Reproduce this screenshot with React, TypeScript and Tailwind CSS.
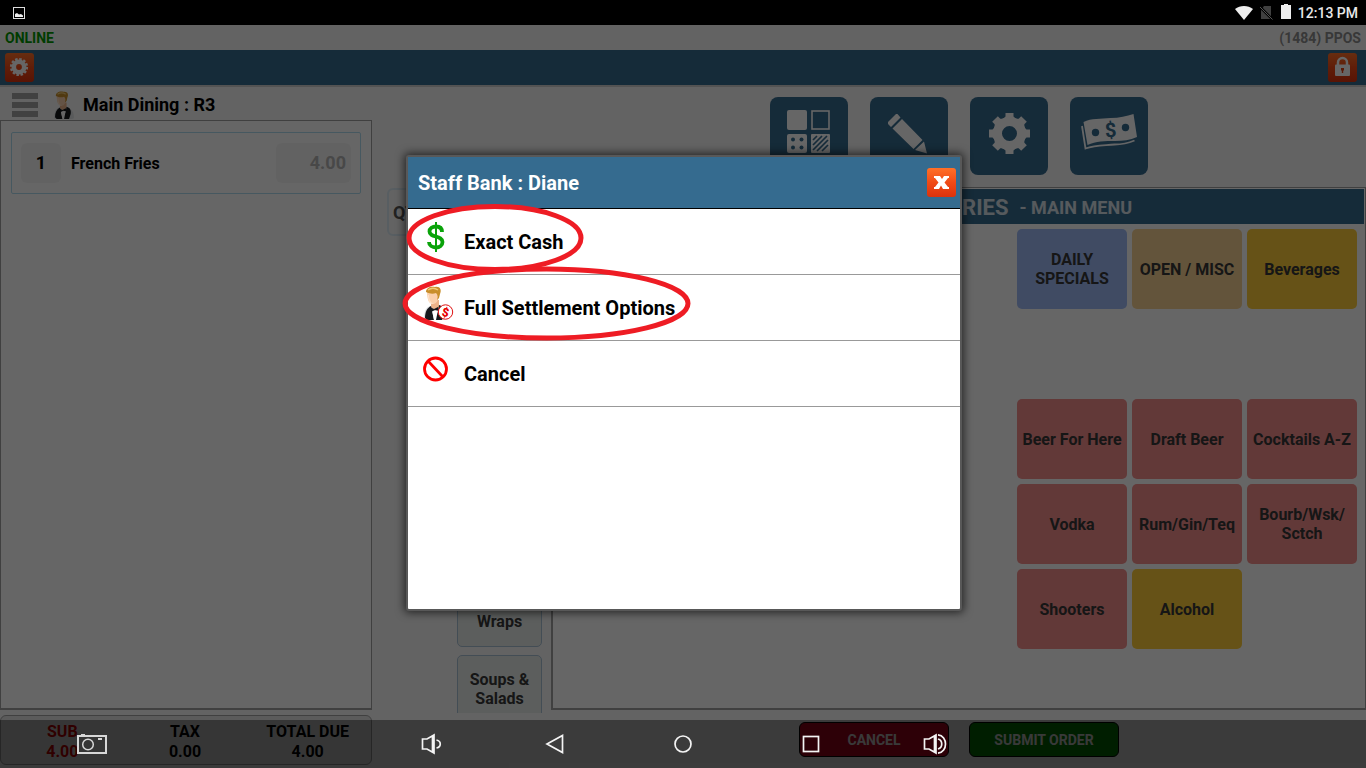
import type { ReactNode } from 'react';
import clsx from 'clsx';

interface Category {
  label: string;
  tone: string;
}

const BLUE = 'bg-[#a0bcf8]';
const SAND = 'bg-[#f8d294]';
const GOLD = 'bg-[#ffcd3a]';
const ROSE = 'bg-[#f58e8c]';

// null leaves a free cell in the grid
const categories: (Category | null)[] = [
  { label: 'DAILY SPECIALS', tone: BLUE },
  { label: 'OPEN / MISC', tone: SAND },
  { label: 'Beverages', tone: GOLD },
  null,
  null,
  null,
  { label: 'Beer For Here', tone: ROSE },
  { label: 'Draft Beer', tone: ROSE },
  { label: 'Cocktails A-Z', tone: ROSE },
  { label: 'Vodka', tone: ROSE },
  { label: 'Rum/Gin/Teq', tone: ROSE },
  { label: 'Bourb/Wsk/ Sctch', tone: ROSE },
  { label: 'Shooters', tone: ROSE },
  { label: 'Alcohol', tone: GOLD },
];

const totals = [
  { label: 'SUB', value: '4.00', color: 'text-[#c80000]' },
  { label: 'TAX', value: '0.00', color: 'text-black' },
  { label: 'TOTAL DUE', value: '4.00', color: 'text-black' },
];

function Waiter({ badge = false, className }: { badge?: boolean; className?: string }) {
  return (
    <svg viewBox={badge ? '0 0 30 34' : '0 0 25 34'} className={className} aria-hidden="true">
      {/* shirt sleeves */}
      <path d="M0 33c0-6 1-10 4-12l5-2 7 1c5 2 8 5 8 13-2 1-4 1-6 1H3c-1 0-2 0-3-1z" fill="#dfe2e4" />
      <path d="M7 14h8v8l-4 2-4-3z" fill="#eeb389" />
      {/* vest */}
      <path d="M1 32c0-6 2-10 6-12l3 14H3zM15 19c4 1 6 4 5 9l-2 6h-8l4-9z" fill="#17191d" />
      <path d="M8 24l3 1 3-1-2 10h-2z" fill="#fff" />
      <path d="M6 21l4 2 4-2 1 4-4-1-4 2z" fill="#17191d" />
      <path d="M3 5c0-3 4-4 8-3 4 0 5 4 4 8-1 5-3 8-6 8-4 0-6-4-6-13z" fill="#fbd0ac" />
      <path d="M4 9c0 5 1 8 4 9h2c-3-1-5-4-5-9z" fill="#fee4cc" />
      <path d="M2 6c0-4 4-6 9-5 5-1 7 3 5 7l-1 4-2 2c1-3 1-5-1-7-3 1-6 1-10-1z" fill="#c98f2c" />
      <path d="M4 4c3-2 7-2 10 0" stroke="#f0cb78" strokeWidth="1.500" fill="none" />
      {badge && (
        <>
          <circle cx="21.500" cy="26" r="7.200" fill="#fff" stroke="#e01010" strokeWidth="1" />
          <text
            x="21.500"
            y="30.500"
            textAnchor="middle"
            transform="rotate(12 21.500 26)"
            className="fill-[#e80000] text-[12px] font-black"
          >
            $
          </text>
        </>
      )}
    </svg>
  );
}

function OrangeButton({ label, children }: { label: string; children: ReactNode }) {
  return (
    <button
      type="button"
      aria-label={label}
      className="flex size-[29px] shrink-0 items-center justify-center rounded-[3px] bg-gradient-to-b from-[#ff7028] via-[#f04a16] to-[#dc320c]"
    >
      <svg viewBox="0 0 29 29" className="size-full" aria-hidden="true">
        {children}
      </svg>
    </button>
  );
}

function ToolTile({ label, children }: { label: string; children: ReactNode }) {
  return (
    <button type="button" aria-label={label} className="size-[78px] rounded-lg bg-[#356b8f]">
      <svg viewBox="0 0 78 78" className="size-full" fill="#fff" aria-hidden="true">
        {children}
      </svg>
    </button>
  );
}

function StatusBar() {
  return (
    <div className="flex h-[25px] shrink-0 items-center justify-between bg-black pr-2 pl-[13px]">
      <svg viewBox="0 0 12 12" className="size-3" aria-hidden="true">
        <rect x="0.5" y="0.5" width="11" height="11" fill="none" stroke="#ddd" />
        <path d="M2 10V7l2-1 2 1.500 2-.5 2 1.500V10z" fill="#eee" />
      </svg>
      <div className="flex items-center">
        <svg viewBox="0 0 18 14" className="mr-[7px] h-3.5 w-[18px]" aria-hidden="true">
          <path d="M0 3C5-1 13-1 18 3L9 14z" fill="#eee" />
        </svg>
        <svg viewBox="0 0 13 14" className="mr-2 h-3.5 w-[13px]" aria-hidden="true">
          <path d="M4 0h7v13H1V4z" fill="#404040" />
          <path d="M0 1l12.500 12.500" stroke="#000" strokeWidth="2.500" />
          <path d="M0 1l12.500 12.500" stroke="#555" strokeWidth="1" />
        </svg>
        <svg viewBox="0 0 10 15" className="mr-[7px] mb-0.5 h-[15px] w-2.5" aria-hidden="true">
          <path d="M3 0h4v1h3v14H0V1h3z" fill="#eee" />
        </svg>
        <span className="text-sm font-medium text-[#e8e8e8]">12:13 PM</span>
      </div>
    </div>
  );
}

function OrderColumn() {
  return (
    <section className="flex w-[372px] shrink-0 flex-col">
      <div className="flex h-[33px] shrink-0 items-center pt-0.5 pl-3">
        <button type="button" aria-label="Menu" className="flex w-[26px] flex-col gap-[3px]">
          <span className="h-1.5 w-full bg-[#a4a4a4]" />
          <span className="h-1.5 w-full bg-[#a4a4a4]" />
          <span className="h-1.5 w-full bg-[#a4a4a4]" />
        </button>
        <Waiter className="ml-4 h-7 w-[21px]" />
        <h1 className="ml-2 pt-px text-lg leading-6 font-bold">Main Dining : R3</h1>
      </div>
      <div className="mb-[3px] flex-1 border border-b-2 border-[#a0a0a0] bg-white p-2.5 pt-[11px]">
        <div className="flex h-[62px] items-center rounded-xs border border-[#b0dcf0] px-[9px]">
          <span className="flex size-10 items-center justify-center rounded-md bg-[#f6f6f6] text-lg font-bold">
            1
          </span>
          <span className="ml-2.5 flex-1 pt-0.5 font-bold">French Fries</span>
          <span className="flex h-10 w-[75px] items-center justify-end rounded-md bg-[#f6f6f6] pr-[5px] text-lg font-bold text-[#b4b4b4]">
            4.00
          </span>
        </div>
      </div>
    </section>
  );
}

function Toolbar() {
  return (
    <div className="flex h-[100px] shrink-0 gap-[22px] pt-2.5 pl-[398px]">
      <ToolTile label="Tables">
        <rect x="17" y="13" width="20" height="20" rx="2" />
        <rect x="42" y="14" width="17" height="18" fill="none" stroke="#fff" strokeWidth="1.600" />
        <rect x="17" y="37" width="20" height="19" rx="2" />
        <g fill="#356b8f">
          <circle cx="23" cy="42.500" r="2" />
          <circle cx="31.500" cy="42.500" r="2" />
          <circle cx="23" cy="50.500" r="2" />
          <circle cx="31.500" cy="50.500" r="2" />
        </g>
        <rect x="41" y="37" width="19" height="19" rx="1" />
        <path
          d="M43 43l4-4M43 48l9-9M43 53l14-14M47 54l11-11M52 54l6-6"
          stroke="#356b8f"
          strokeWidth="1.700"
        />
      </ToolTile>
      <ToolTile label="Edit">
        <path d="M26 17l-8 8v2l3 3 9.500-9.500-3-3.500zM32 22l-9.500 9.500L43.500 52l9-9zM54 44.500l-9 8.500 12 3.500z" />
      </ToolTile>
      <ToolTile label="Settings">
        <circle cx="39.500" cy="36.500" r="12" fill="none" stroke="#fff" strokeWidth="9" />
        {[0, 45, 90, 135, 180, 225, 270, 315].map((angle) => (
          <path
            key={angle}
            d="M35.500 16h8v3.500l3 3h-14l3-3z"
            transform={`rotate(${angle} 39.500 36.500)`}
          />
        ))}
      </ToolTile>
      <ToolTile label="Cash">
        <path d="M13.500 25c8-4 17-3 27-4 9 0 16-2 23-4L67 40c-7 3-14 4-22 4-10 0-19 0-27.500 4z" />
        <path
          d="M12 29l3.500 22.500c10-4 19-3 29-4 8 0 13-1 20-4"
          fill="none"
          stroke="#fff"
          strokeWidth="1.800"
        />
        <circle cx="25.500" cy="35.500" r="3.700" fill="#356b8f" />
        <circle cx="55.500" cy="30.500" r="3.700" fill="#356b8f" />
        <text
          x="40.500"
          y="40"
          textAnchor="middle"
          transform="rotate(-5 40 33)"
          className="fill-[#356b8f] text-xl font-bold"
        >
          $
        </text>
      </ToolTile>
    </div>
  );
}

function CategoryPanel() {
  return (
    <section className="mb-[3px] flex-1 border border-b-2 border-l-2 border-[#a0a0a0] bg-white pt-px">
      <h2 className="mr-px flex h-[35px] items-center justify-end gap-[11px] bg-[#356b8f] pt-0.5 pr-[232px] font-bold text-white/80">
        <span className="text-[22px]">CATEGORIES</span>
        <span className="text-lg">- MAIN MENU</span>
      </h2>
      <div className="grid auto-rows-[80px] grid-cols-[repeat(3,110px)] justify-end gap-[5px] pt-[5px] pr-2">
        {categories.map((category, i) =>
          category ? (
            <button
              key={category.label}
              type="button"
              className={clsx('rounded-[5px] leading-[19px] font-bold text-[#383838]', category.tone)}
            >
              {category.label}
            </button>
          ) : (
            <div key={i} />
          ),
        )}
      </div>
    </section>
  );
}

function Footer() {
  return (
    <footer className="flex h-[55px] shrink-0 pt-0.5">
      <dl className="grid h-[50px] w-[372px] grid-cols-3 rounded-md border border-[#a0a0a0] bg-[#e4e4e4] pt-1.5 pr-0.5 text-center leading-5 font-bold">
        {totals.map(({ label, value, color }) => (
          <div key={label} className={color}>
            <dt>{label}</dt>
            <dd>{value}</dd>
          </div>
        ))}
      </dl>
      <div className="flex gap-5 pt-[7px] pl-[427px] text-sm font-bold text-[#f0f0f0]">
        <button type="button" className="h-[35px] w-[150px] rounded-md border border-black bg-[#be001e]">
          CANCEL
        </button>
        <button type="button" className="h-[35px] w-[150px] rounded-md border border-black bg-[#007d00]">
          SUBMIT ORDER
        </button>
      </div>
    </footer>
  );
}

function ModalRow({ icon, label }: { icon: ReactNode; label: string }) {
  return (
    <button
      type="button"
      className="flex h-[66px] w-full items-center border-b border-[#999] pl-3.5 text-left text-xl font-bold"
    >
      <span className="flex w-[42px] shrink-0 pb-2.5">{icon}</span>
      {label}
    </button>
  );
}

function StaffBankModal() {
  return (
    <div
      role="dialog"
      aria-label="Staff Bank"
      className="relative h-[456px] w-[556px] rounded-[3px] border-2 border-[#585858] bg-white shadow-[0_0_8px_2px_rgba(0,0,0,0.6)]"
    >
      <header className="flex h-[52px] items-center justify-between border-b border-black bg-[#356b8f] pr-1 pl-2.5">
        <h2 className="text-xl font-bold text-white">Staff Bank : Diane</h2>
        <OrangeButton label="Close">
          <path
            d="M7 8h6l2 3 2-3h5v2h-1l-3.500 4.500L21 19h1v2h-6l-2-3.500L12 21H7v-2h1l3.500-4.500L8 10H7z"
            fill="#fff"
          />
        </OrangeButton>
      </header>
      <ModalRow
        label="Exact Cash"
        icon={
          <svg viewBox="0 0 28 32" className="h-8 w-7" fill="none" stroke="#0aa30a" aria-hidden="true">
            <path
              d="M20 11c0-4-2.500-5.500-6-5.500S7.500 7.500 7.500 10.500c0 6.500 13 3.500 13 10.500 0 3.500-3 5.500-6.500 5.500S7 24.500 7 21"
              strokeWidth="3.800"
            />
            <path d="M14 1v30" strokeWidth="2" />
          </svg>
        }
      />
      <ModalRow label="Full Settlement Options" icon={<Waiter badge className="ml-0.5 h-[34px] w-[30px]" />} />
      <ModalRow
        label="Cancel"
        icon={
          <svg viewBox="0 0 28 28" className="size-7" fill="none" stroke="#f00" aria-hidden="true">
            <circle cx="13.500" cy="14" r="11" strokeWidth="2.800" />
            <path d="M6 6l15 16" strokeWidth="2.800" />
          </svg>
        }
      />

      {/* Highlight rings around the two payment options */}
      <svg
        viewBox="0 0 300 150"
        className="pointer-events-none absolute top-10 -left-2 h-[150px] w-[300px]"
        fill="none"
        stroke="#ee1c24"
        strokeWidth="5"
        aria-hidden="true"
      >
        <ellipse cx="95" cy="41" rx="86" ry="31.500" />
        <ellipse cx="146.500" cy="106.500" rx="141.500" ry="34.500" />
      </svg>
    </div>
  );
}

function NavButton({ label, className, children }: { label: string; className: string; children: ReactNode }) {
  return (
    <button type="button" aria-label={label} className={clsx('flex items-center justify-center', className)}>
      <svg
        viewBox="0 0 24 24"
        className="size-6"
        fill="none"
        stroke="#f4f4f4"
        strokeWidth="1.700"
        aria-hidden="true"
      >
        {children}
      </svg>
    </button>
  );
}

function AndroidNav() {
  return (
    <nav className="absolute inset-x-0 bottom-0 flex h-12 bg-black/40">
      <div className="flex flex-1 items-center">
        <button type="button" aria-label="Screenshot" className="ml-[77px]">
          <svg viewBox="0 0 30 20" className="h-5 w-[30px]" fill="none" stroke="#d8d8d8" aria-hidden="true">
            <rect x="1" y="2" width="28" height="17" strokeWidth="2" />
            <circle cx="11" cy="10.500" r="5.300" strokeWidth="1.500" />
            <path d="M4 .5h4M21 5h4" strokeWidth="2" />
          </svg>
        </button>
      </div>
      <NavButton label="Volume down" className="w-[120px]">
        <path d="M3.500 7H8l7-4v18l-7-4H3.500zM13.500 4v16M17.500 8c5 1 5 7 0 8" />
      </NavButton>
      <NavButton label="Back" className="w-32">
        <path d="M19.500 3.500v17L4 12z" />
      </NavButton>
      <NavButton label="Home" className="w-32">
        <circle cx="12" cy="12" r="8" />
      </NavButton>
      <NavButton label="Recent apps" className="w-32">
        <rect x="4.500" y="4.500" width="15" height="15" />
      </NavButton>
      <NavButton label="Volume up" className="w-[120px]">
        <path d="M1.500 7H6l7-4v18l-7-4H1.500zM11.500 4v16M15 7c5 1.500 5 8.500 0 10M15 2.800c10 1 10 17.400 0 18.400" />
      </NavButton>
      <div className="flex-1" />
    </nav>
  );
}

export default function App() {
  return (
    <div className="relative flex h-screen flex-col overflow-hidden bg-[#f8f8f8] font-['Roboto',sans-serif] text-black">
      <StatusBar />
      <div className="relative flex min-h-0 flex-1 flex-col">
        <div className="flex h-[25px] shrink-0 items-center justify-between px-[5px] text-sm font-bold">
          <span className="text-[#009600]">ONLINE</span>
          <span className="text-[#8c8c8c]">(1484) PPOS</span>
        </div>
        <div className="flex h-[37px] shrink-0 items-center justify-between border-b-2 border-[#cfcfcf] bg-[#356b8f] pr-[9px] pl-[5px]">
          <OrangeButton label="Settings">
            <circle cx="14" cy="14" r="5.200" fill="none" stroke="#fff" strokeWidth="4.600" />
            <circle
              cx="14"
              cy="14"
              r="8"
              fill="none"
              stroke="#fff"
              strokeWidth="2.200"
              strokeDasharray="2.500 1.690"
            />
          </OrangeButton>
          <OrangeButton label="Lock">
            <path d="M10 12V9.500a4.500 4.500 0 019 0V12" fill="none" stroke="#fff" strokeWidth="2.500" />
            <rect x="7" y="11.500" width="15" height="11.500" rx="1" fill="#fff" />
            <path d="M13 15h3v2.500h-.8V20h-1.400v-2.500H13z" fill="#e04010" />
          </OrangeButton>
        </div>

        <main className="flex min-h-0 flex-1">
          <OrderColumn />
          <div className="flex min-w-0 flex-1 flex-col">
            <Toolbar />
            <div className="flex min-h-0 flex-1">
              <aside className="flex w-[179px] shrink-0 flex-col pt-px">
                <button
                  type="button"
                  className="ml-[15px] h-12 w-20 rounded-md border-2 border-[#dcebf5] pt-0.5 pl-1 text-left text-lg font-bold text-[#555]"
                >
                  QTY
                </button>
                <div className="mt-auto ml-[85px] flex h-[116px] w-[85px] flex-col gap-2 overflow-hidden leading-[19px] font-bold text-[#383838]">
                  <button
                    type="button"
                    className="h-[50px] shrink-0 rounded-[5px] border border-[#a8c0d4] bg-[#e6ebe9] pb-0.5"
                  >
                    Wraps
                  </button>
                  <button
                    type="button"
                    className="h-[70px] shrink-0 rounded-[5px] border border-[#a8c0d4] bg-[#e6ebe9] pb-0.5"
                  >
                    Soups & Salads
                  </button>
                </div>
              </aside>
              <CategoryPanel />
            </div>
          </div>
        </main>
        <Footer />
        <div className="absolute inset-0 bg-black/60" />
      </div>

      <div className="absolute inset-0 flex items-center justify-center pb-0.5 pl-0.5">
        <StaffBankModal />
      </div>
      <AndroidNav />
    </div>
  );
}
